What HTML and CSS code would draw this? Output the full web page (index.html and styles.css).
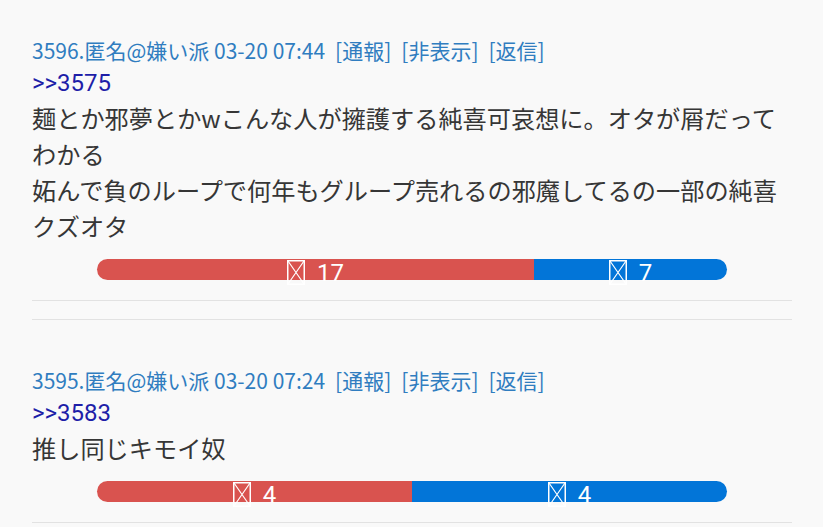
FILE: index.html
```html
<!DOCTYPE html>
<html lang="ja">
<head>
<meta charset="utf-8">
<link rel="stylesheet" href="styles.css">
</head>
<body>
<main class="thread">
  <article class="post">
    <div class="meta">3596.匿名@嫌い派 03-20 07:44<a class="act">[通報]</a><a class="act">[非表示]</a><a class="act">[返信]</a></div>
    <div class="anchor">&gt;&gt;3575</div>
    <div class="body">麺とか邪夢とかwこんな人が擁護する純喜可哀想に。オタが屑だってわかる<br>妬んで負のループで何年もグループ売れるの邪魔してるの一部の純喜クズオタ</div>
    <div class="vote">
      <div class="seg good" style="width:69.4%"><span class="label"><svg class="tofu" viewBox="0 0 18 25"><rect x="0.75" y="0.75" width="16.5" height="23.5" fill="none" stroke="#fff" stroke-width="1.5"/><path d="M1 1L17 24M17 1L1 24" stroke="#fff" stroke-width="1.2"/></svg>17</span></div>
      <div class="seg bad"><span class="label"><svg class="tofu" viewBox="0 0 18 25"><rect x="0.75" y="0.75" width="16.5" height="23.5" fill="none" stroke="#fff" stroke-width="1.5"/><path d="M1 1L17 24M17 1L1 24" stroke="#fff" stroke-width="1.2"/></svg>7</span></div>
    </div>
  </article>
  <article class="post">
    <div class="meta">3595.匿名@嫌い派 03-20 07:24<a class="act">[通報]</a><a class="act">[非表示]</a><a class="act">[返信]</a></div>
    <div class="anchor">&gt;&gt;3583</div>
    <div class="body">推し同じキモイ奴</div>
    <div class="vote">
      <div class="seg good" style="width:50%"><span class="label"><svg class="tofu" viewBox="0 0 18 25"><rect x="0.75" y="0.75" width="16.5" height="23.5" fill="none" stroke="#fff" stroke-width="1.5"/><path d="M1 1L17 24M17 1L1 24" stroke="#fff" stroke-width="1.2"/></svg>4</span></div>
      <div class="seg bad"><span class="label"><svg class="tofu" viewBox="0 0 18 25"><rect x="0.75" y="0.75" width="16.5" height="23.5" fill="none" stroke="#fff" stroke-width="1.5"/><path d="M1 1L17 24M17 1L1 24" stroke="#fff" stroke-width="1.2"/></svg>4</span></div>
    </div>
  </article>
</main>
</body>
</html>
```
FILE: styles.css
```css
html, body {
  margin: 0;
  padding: 0;
  background: #f9f9f9;
}
body {
  font-family: "Noto Sans CJK JP", sans-serif;
  color: #363636;
  overflow: hidden;
}
.thread {
  padding: 34px 31px 0 32px;
}
.post {
  padding-bottom: 20px;
  border-bottom: 1px solid #e2e2e2;
}
.post + .post {
  margin-top: 18px;
  border-top: 1px solid #e2e2e2;
  padding-top: 44px;
}
.meta {
  font-size: 21px;
  line-height: 32px;
  color: #307dc0;
  white-space: nowrap;
}
.act {
  margin-left: 10px;
}
.anchor {
  font-family: "Roboto", "Noto Sans CJK JP", sans-serif;
  font-size: 24px;
  line-height: 34px;
  color: #1e1ea8;
}
.body {
  font-size: 24.2px;
  line-height: 36px;
  color: #363636;
}
.vote {
  display: flex;
  margin: 15px 65px 0;
  height: 21px;
}
.seg {
  display: flex;
  justify-content: center;
  height: 21px;
}
.good {
  background: #d9534f;
  border-radius: 11px 0 0 11px;
}
.bad {
  flex: 1;
  background: #0275d8;
  border-radius: 0 11px 11px 0;
}
.label {
  display: flex;
  align-items: flex-start;
  gap: 12px;
  color: #fff;
  font-family: "Roboto", sans-serif;
  font-size: 24px;
  line-height: 28px;
}
.tofu {
  flex-shrink: 0;
  width: 18px;
  height: 25px;
  margin-top: 1px;
}
```
